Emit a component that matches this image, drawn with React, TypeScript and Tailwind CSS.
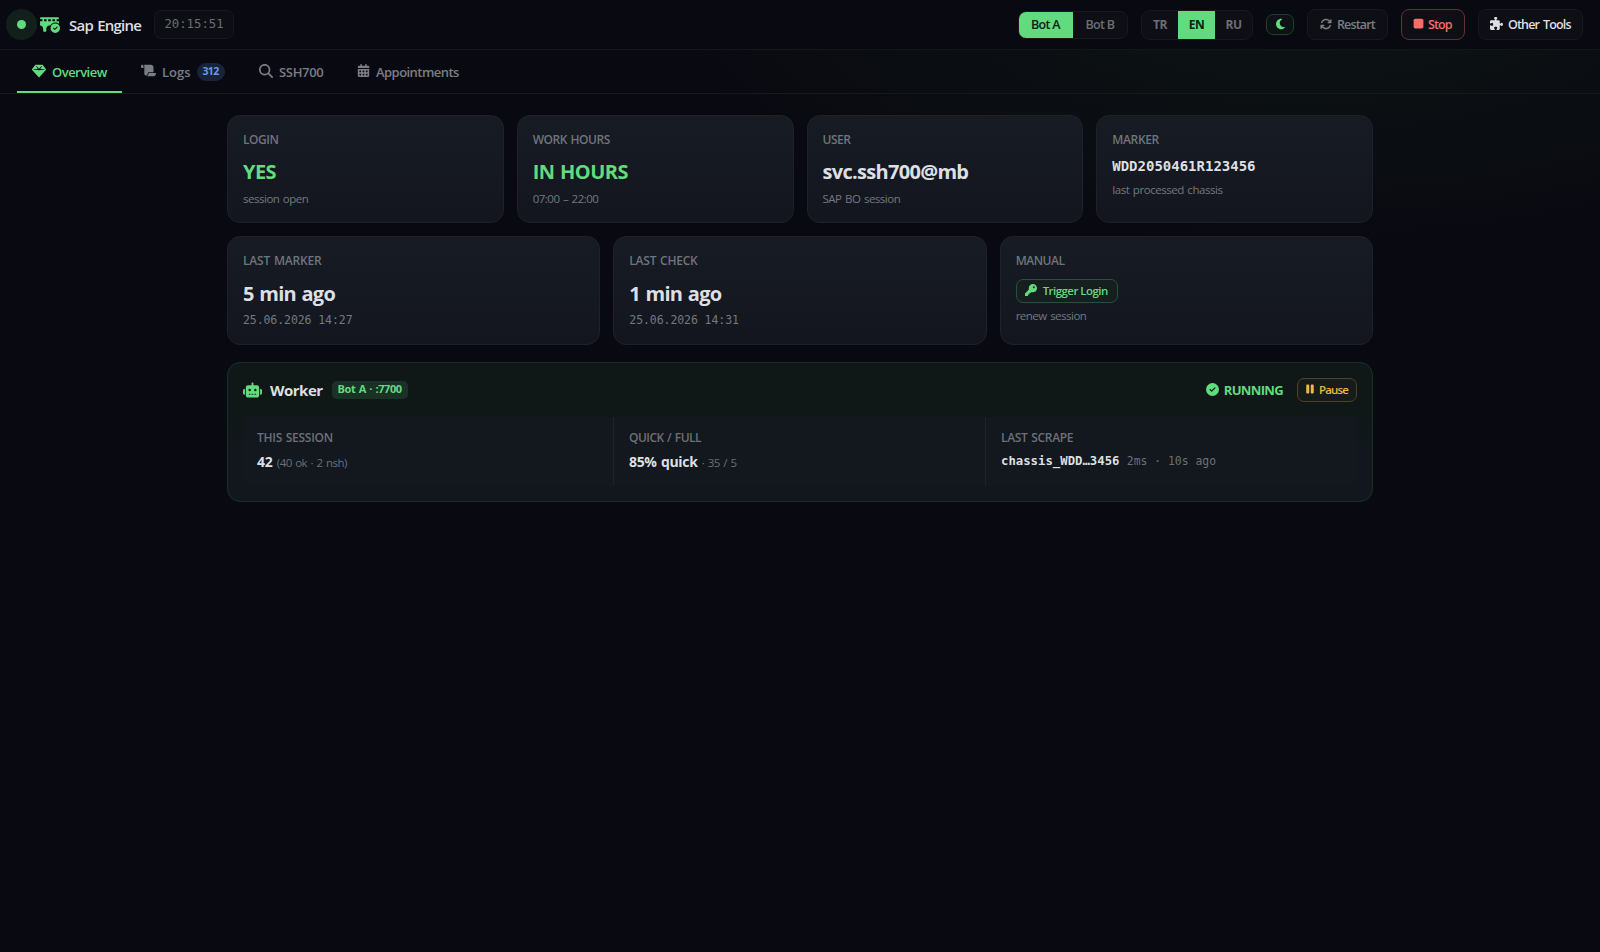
import React, { useState } from 'react'
import {
  FaArrowsRotate,
  FaBridgeCircleCheck,
  FaCalendarDays,
  FaCircleCheck,
  FaGem,
  FaKey,
  FaMagnifyingGlass,
  FaMoon,
  FaPause,
  FaPuzzlePiece,
  FaRobot,
  FaScroll,
  FaStop,
} from 'react-icons/fa6'

const MONO = "font-['DejaVu_Sans_Mono',monospace] [word-spacing:0]"

interface ICardProps {
  label: string
  labelClass?: string
  className?: string
  children: React.ReactNode
}

const Card = ({ label, labelClass = 'tracking-[-0.04em]', className = 'h-[108px]', children }: ICardProps) => (
  <div className={`flex flex-col items-start rounded-[13px] border border-[#1e2228] bg-linear-to-b from-[#171b23] to-[#13161e] px-[15px] pt-4 ${className}`}>
    <div className={`text-xs leading-4 font-semibold text-[#70747b] uppercase ${labelClass}`}>{label}</div>
    {children}
  </div>
)

const Hint = ({ className = 'mt-[5px] tracking-[-0.042em]', children }: { className?: string, children: React.ReactNode }) => (
  <div className={`text-[11.5px] leading-4 text-[#74787f] ${className}`}>{children}</div>
)

interface IStatProps {
  label: string
  labelClass: string
  first?: boolean
  children: React.ReactNode
}

const Stat = ({ label, labelClass, first, children }: IStatProps) => (
  <div className={`flex-1 pt-[13px] ${first ? 'pl-[14px]' : 'border-l border-[#1e232a] pl-[15px]'}`}>
    <div className={`text-xs leading-4 font-semibold text-[#6c7077] ${labelClass}`}>{label}</div>
    {children}
  </div>
)

const tabs = [
  { id: 'overview', label: 'Overview', icon: <FaGem className="size-[14px]" />, width: 'w-[105px]', text: 'tracking-[-0.04em]' },
  { id: 'logs', label: 'Logs', icon: <FaScroll className="size-[15px]" />, width: 'w-[114px]', text: '', count: 312 },
  { id: 'ssh', label: 'SSH700', icon: <FaMagnifyingGlass className="size-[14px]" />, width: 'w-[94px]', text: 'tracking-[-0.025em]' },
  { id: 'appointments', label: 'Appointments', icon: <FaCalendarDays className="size-[13px]" />, width: 'w-[132px]', text: 'tracking-[-0.042em]' },
]

const App = () => {
  const [tab, setTab] = useState('overview')
  const [lang, setLang] = useState('EN')
  const [bot, setBot] = useState('Bot A')

  return (
    <div className="min-h-screen bg-[#090a11] bg-[radial-gradient(ellipse_620px_240px_at_1300px_0px,#0d1414_0%,#090a11_100%)] font-['Open_Sans','Noto_Sans',sans-serif] text-[#dedfe2] [word-spacing:0.06em]">
      {/* Top bar */}
      <header className="flex h-[50px] items-center border-b border-[#13161b] bg-[#090a11] pr-[17px] pl-[6px]">
        <span className="flex size-[31px] items-center justify-center rounded-full bg-[#11201a]">
          <span className="size-[9px] rounded-full bg-[#62db7f]"></span>
        </span>
        <FaBridgeCircleCheck className="mr-px ml-[2px] mb-px h-[17px] w-[21px] text-[#62db7f]" />
        <h1 className="ml-2 w-[73px] text-[15px] leading-5 font-semibold tracking-[-0.05em] whitespace-nowrap">Sap Engine</h1>
        <span className={`ml-3 flex h-[29px] w-20 items-center justify-center rounded-[7px] border border-[#15181c] bg-[#0c0e13] text-[12.3px] text-[#6b6e74] ${MONO}`}>
          20:15:51
        </span>

        <div className="ml-auto flex items-center gap-[13px]">
          <div className="flex h-7 overflow-hidden rounded-[8px] border border-[#16191e] bg-[#0d0f15] text-[12.5px] font-semibold tracking-[-0.055em] [word-spacing:0.12em]">
            {['Bot A', 'Bot B'].map((name) => (
              <button
                key={name}
                onClick={() => setBot(name)}
                className={`pt-px ${bot === name ? '-my-px -ml-px w-[55px] bg-[#62db7f] text-[#0b2213]' : 'w-[54px] text-[#6b6e76]'}`}
              >
                {name}
              </button>
            ))}
          </div>
          <div className="flex h-[30px] overflow-hidden rounded-[9px] border border-[#16191e] bg-[#0d0f15] text-xs font-bold tracking-[-0.04em]">
            {['TR', 'EN', 'RU'].map((code) => (
              <button
                key={code}
                onClick={() => setLang(code)}
                className={`pt-px ${lang === code ? '-my-px w-[37px] bg-[#62db7f] text-[#0b2213]' : 'w-9 text-[#6b6e76] last:w-[37px]'}`}
              >
                {code}
              </button>
            ))}
          </div>
          <button className="flex h-[21px] w-7 items-center justify-center rounded-[7px] border border-[#1d4229] bg-[#0d1315] pb-0.5 text-[#62db7f]">
            <FaMoon className="h-[12px] w-[11px]" />
          </button>
          <button className="flex h-[31px] w-[81px] items-center rounded-[8px] border border-[#17191f] bg-[#0d0f15] pl-3 text-[12.5px] font-semibold tracking-[-0.069em] text-[#7a7d85]">
            <FaArrowsRotate className="mr-[5px] mb-0.5 size-3" />
            <span className="pt-px">Restart</span>
          </button>
          <button className="flex h-[31px] w-16 items-center rounded-[8px] border border-[#63302f] bg-[#0d0f15] pl-[10px] text-[12.5px] font-semibold tracking-[-0.075em] text-[#fd6a69]">
            <FaStop className="mr-[3px] mb-0.5 size-[13px] shrink-0" />
            <span className="pt-px">Stop</span>
          </button>
          <button className="flex h-[31px] w-[105px] items-center rounded-[8px] border border-[#17191f] bg-[#0d0f15] pl-[11px] text-[12.5px] font-semibold tracking-[-0.067em] whitespace-nowrap [word-spacing:0.12em]">
            <FaPuzzlePiece className="mr-[5px] mb-0.5 size-[13px]" />
            <span className="pt-px">Other Tools</span>
          </button>
        </div>
      </header>

      {/* Tabs */}
      <nav className="flex h-11 gap-1 border-b border-[#15191d] pl-[17px]">
        {tabs.map((t) => (
          <button
            key={t.id}
            onClick={() => setTab(t.id)}
            className={`flex items-center border-b-2 pt-1 pl-[15px] text-[13px] font-semibold whitespace-nowrap ${t.width} ${tab === t.id ? 'border-[#62db7f] text-[#62db7f]' : 'border-transparent text-[#7a7d85]'}`}
          >
            <span className="mr-[6px] pb-1">{t.icon}</span>
            <span className={`pt-px ${t.text}`}>{t.label}</span>
            {t.count && (
              <span className="mb-px ml-[6px] flex h-[18px] w-[28px] items-center justify-center rounded-full bg-[#172338] text-[10.5px] font-bold tracking-[-0.06em] text-[#6a97ee]">
                {t.count}
              </span>
            )}
          </button>
        ))}
      </nav>

      <main className="mx-auto w-[1146px] pt-[21px]">
        {/* Status cards */}
        <div className="grid grid-cols-4 gap-[13px]">
          <Card label="Login">
            <div className="mt-[10px] text-xl leading-7 font-bold tracking-[-0.03em] text-[#62db7f]">YES</div>
            <Hint>session open</Hint>
          </Card>
          <Card label="Work hours">
            <div className="mt-[10px] text-xl leading-7 font-bold tracking-[-0.028em] text-[#62db7f]">IN HOURS</div>
            <Hint className="mt-[5px] tracking-[-0.045em]">07:00 – 22:00</Hint>
          </Card>
          <Card label="User">
            <div className="mt-[10px] text-xl leading-7 font-bold tracking-[-0.035em]">svc.ssh700@mb</div>
            <Hint>SAP BO session</Hint>
          </Card>
          <Card label="Marker" labelClass="tracking-[-0.028em]">
            <div className={`mt-[8px] text-sm leading-5 font-bold ${MONO}`}>WDD2050461R123456</div>
            <Hint className="mt-[6px] tracking-[-0.039em]">last processed chassis</Hint>
          </Card>
        </div>

        <div className="mt-[13px] grid grid-cols-3 gap-[13px]">
          <Card label="Last marker" labelClass="tracking-[-0.016em]" className="h-[109px]">
            <div className="mt-[11px] text-xl leading-7 font-bold tracking-[-0.035em]">5 min ago</div>
            <Hint className={`mt-1 ${MONO} tracking-[-0.007em]`}>25.06.2026 14:27</Hint>
          </Card>
          <Card label="Last check" labelClass="tracking-[-0.02em]" className="h-[109px]">
            <div className="mt-[11px] text-xl leading-7 font-bold tracking-[-0.035em]">1 min ago</div>
            <Hint className={`mt-1 ${MONO} tracking-[-0.007em]`}>25.06.2026 14:31</Hint>
          </Card>
          <Card label="Manual" labelClass="tracking-[-0.04em]" className="h-[109px]">
            <button className="mt-[10px] flex h-6 w-[102px] items-center rounded-[7px] border border-[#26523a] bg-[#161e20] pl-2 text-[11.5px] font-semibold tracking-[-0.047em] whitespace-nowrap text-[#62db7f]">
              <FaKey className="mr-[6px] mb-0.5 size-3" />
              Trigger Login
            </button>
            <Hint className="mt-[5px] tracking-[-0.044em]">renew session</Hint>
          </Card>
        </div>

        {/* Worker */}
        <section className="mt-[17px] h-[140px] rounded-[13px] border border-[#1a3026] bg-linear-to-b from-[#0f1816] from-40% to-[#11171d] to-60% px-[15px] pt-[15px]">
          <div className="flex h-6 items-center">
            <FaRobot className="h-[16px] w-[19px] text-[#62db7f]" />
            <h2 className="ml-[8px] text-[15px] leading-5 font-bold tracking-[-0.033em]">Worker</h2>
            <span className="ml-[9px] flex h-[18px] w-[76px] items-center justify-center rounded-[5px] bg-[#1a3225] pb-px text-[11px] font-bold tracking-[-0.037em] text-[#62db7f]">
              Bot A · :7700
            </span>
            <span className="ml-auto flex items-center text-[13px] font-bold tracking-[-0.05em] text-[#62db7f]">
              <FaCircleCheck className="mr-[5px] mb-0.5 size-[13px]" />
              <span className="pt-px">RUNNING</span>
            </span>
            <button className="ml-[14px] flex h-6 w-[60px] items-center rounded-[7px] border border-[#4c442c] bg-[#161c1c] pl-[7px] text-[11.5px] font-semibold tracking-[-0.075em] text-[#efb649]">
              <FaPause className="mr-1 mb-0.5 h-[12px] w-[10px]" />
              Pause
            </button>
          </div>

          <div className="mt-[15px] flex h-[68px] bg-[#13171e]">
            <Stat label="THIS SESSION" labelClass="tracking-[-0.023em]" first>
              <div className="mt-[6px] text-sm leading-5 font-bold tracking-[-0.02em]">
                42 <span className="text-[11.5px] font-normal tracking-[-0.045em] text-[#6c7077]">(40 ok · 2 nsh)</span>
              </div>
            </Stat>
            <Stat label="QUICK / FULL" labelClass="tracking-[-0.045em]">
              <div className="mt-[6px] text-sm leading-5 font-bold tracking-[-0.023em]">
                85% quick <span className="text-[11.5px] font-normal tracking-[-0.045em] text-[#6c7077]">· 35 / 5</span>
              </div>
            </Stat>
            <Stat label="LAST SCRAPE" labelClass="tracking-[-0.027em]">
              <div className={`mt-[6px] text-[12.3px] leading-[18px] font-bold ${MONO}`}>
                chassis_WDD…3456 <span className="text-[11.4px] font-normal text-[#6c7077]">2ms · 10s ago</span>
              </div>
            </Stat>
          </div>
        </section>
      </main>
    </div>
  )
}

export default App
